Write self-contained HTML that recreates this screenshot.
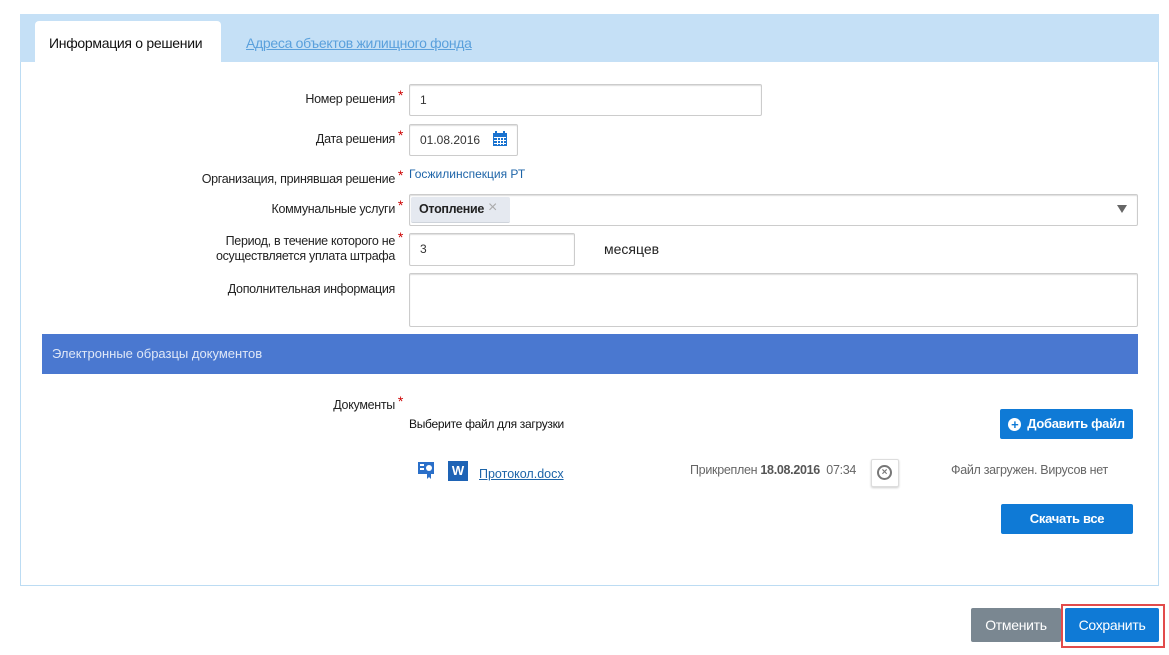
<!DOCTYPE html>
<html><head><meta charset="utf-8"><style>
body{margin:0;width:1169px;height:655px;background:#fff;font-family:"Liberation Sans",sans-serif;position:relative;overflow:hidden;color:#222}
.a{position:absolute}
.panel{left:20px;top:62px;width:1137px;height:523px;border:1px solid #bcdcf3;border-top:none;background:#fff}
.tabs{left:20px;top:14px;width:1139px;height:48px;background:#c5e0f6}
.lbl{position:absolute;right:774px;font-size:12.5px;letter-spacing:-0.3px;color:#222;text-align:right;line-height:15px}
.lbl:after{content:"*";color:#c00;position:absolute;right:-8px;top:-4px;font-size:14px}
.lbl.n:after{content:""}
.in{position:absolute;border:1px solid #ccc;border-radius:2px;background:#fff;box-shadow:inset 0 1px 1px #ddd;font-size:12px;color:#333;box-sizing:border-box;padding-left:10px}
.btn{position:absolute;background:#0f7ad6;color:#fff;font-size:13px;font-weight:bold;letter-spacing:-0.3px;text-align:center;border-radius:2px}
</style></head><body>
<div class="a panel"></div>
<div class="a tabs"></div>
<div class="a" style="left:35px;top:21px;width:186px;height:41px;background:#fff;border-radius:4px 4px 0 0"></div>
<div class="a" style="left:49px;top:35px;font-size:14px;letter-spacing:-0.3px;color:#111">Информация о решении</div>
<div class="a" style="left:246px;top:35px;font-size:14px;letter-spacing:-0.3px;color:#5aa0dc;text-decoration:underline">Адреса объектов жилищного фонда</div>

<div class="lbl" style="top:92px">Номер решения</div>
<div class="in" style="left:409px;top:84px;width:353px;height:32px;line-height:30px">1</div>
<div class="lbl" style="top:132px">Дата решения</div>
<div class="in" style="left:409px;top:124px;width:109px;height:32px;line-height:30px">01.08.2016</div>
<svg class="a" style="left:492px;top:131px" width="16" height="16" viewBox="0 0 16 16"><rect x="1" y="2" width="14" height="13" fill="#1a73d0"/><rect x="3" y="0" width="2" height="4" fill="#1a73d0"/><rect x="11" y="0" width="2" height="4" fill="#1a73d0"/><g fill="#fff"><rect x="2" y="6" width="12" height="1"/><rect x="2" y="9" width="12" height="1"/><rect x="2" y="12" width="12" height="1"/><rect x="5" y="6" width="1" height="8"/><rect x="8" y="6" width="1" height="8"/><rect x="11" y="6" width="1" height="8"/></g></svg>
<div class="lbl" style="top:172px">Организация, принявшая решение</div>
<div class="a" style="left:409px;top:167px;font-size:12px;color:#1d64a8">Госжилинспекция РТ</div>
<div class="lbl" style="top:202px">Коммунальные услуги</div>
<div class="in" style="left:409px;top:194px;width:729px;height:32px"></div>
<div class="a" style="left:411px;top:197px;width:99px;height:25px;background:#e5e9f0;border-radius:2px;border-bottom:1px solid #cfd4db"></div>
<div class="a" style="left:419px;top:202px;font-size:12.5px;font-weight:bold;letter-spacing:-0.3px;color:#222">Отопление</div>
<div class="a" style="left:488px;top:199px;font-size:16px;color:#aaa">×</div>
<div class="a" style="left:1117px;top:205px;width:0;height:0;border-left:5px solid transparent;border-right:5px solid transparent;border-top:8px solid #666"></div>
<div class="lbl" style="top:234px">Период, в течение которого не<br>осуществляется уплата штрафа</div>
<div class="in" style="left:409px;top:233px;width:166px;height:33px;line-height:31px">3</div>
<div class="a" style="left:604px;top:241px;font-size:14px;color:#222">месяцев</div>
<div class="lbl n" style="top:282px">Дополнительная информация</div>
<div class="in" style="left:409px;top:273px;width:729px;height:54px"></div>
<div class="a" style="left:42px;top:334px;width:1096px;height:40px;background:#4a78d0"></div>
<div class="a" style="left:52px;top:346px;font-size:13px;color:#dfe7f7">Электронные образцы документов</div>

<div class="lbl" style="top:398px">Документы</div>
<div class="a" style="left:409px;top:417px;font-size:12px;letter-spacing:-0.3px;color:#111">Выберите файл для загрузки</div>
<div class="btn" style="left:1000px;top:409px;width:133px;height:30px;line-height:30px"><span style="display:inline-block;width:13px;height:13px;border-radius:50%;background:#fff;color:#0f7ad6;font-size:13px;line-height:13px;vertical-align:-1px;margin-right:6px">+</span>Добавить файл</div>
<svg class="a" style="left:418px;top:461px" width="18" height="20" viewBox="0 0 18 20"><rect x="0" y="1" width="16" height="12" fill="#2a6fc9"/><rect x="2" y="3" width="4" height="2" fill="#fff"/><rect x="2" y="7" width="4" height="2" fill="#fff"/><circle cx="11" cy="7" r="3" fill="#fff"/><path d="M9 12v6l2-2 2 2v-6z" fill="#2a6fc9"/></svg>
<div class="a" style="left:448px;top:461px;width:20px;height:20px;background:#1e63b5;color:#fff;font-weight:bold;font-size:13px;text-align:center;line-height:20px">W</div>
<div class="a" style="left:479px;top:467px;font-size:12.5px;color:#1d64a8;text-decoration:underline">Протокол.docx</div>
<div class="a" style="left:690px;top:463px;font-size:12.5px;letter-spacing:-0.3px;color:#666">Прикреплен <b style="color:#555">18.08.2016</b>&nbsp; 07:34</div>
<div class="a" style="left:871px;top:459px;width:26px;height:26px;border:1px solid #ddd;border-radius:2px;box-shadow:0 1px 2px #ccc;background:#fff"></div>
<div class="a" style="left:877px;top:465px;width:11px;height:11px;border:2px solid #777;border-radius:50%;text-align:center;font-size:10px;line-height:11px;color:#777;font-weight:bold">×</div>
<div class="a" style="left:951px;top:463px;font-size:12.5px;letter-spacing:-0.3px;color:#666">Файл загружен. Вирусов нет</div>
<div class="btn" style="left:1001px;top:504px;width:132px;height:30px;line-height:30px">Скачать все</div>

<div class="btn" style="left:971px;top:608px;width:90px;height:34px;line-height:34px;background:#7a8791;font-size:14px;font-weight:normal">Отменить</div>
<div class="a" style="left:1061px;top:604px;width:100px;height:40px;border:2px solid #e24b4b"></div>
<div class="btn" style="left:1065px;top:608px;width:94px;height:34px;line-height:34px;font-size:14px;font-weight:normal">Сохранить</div>
</body></html>
